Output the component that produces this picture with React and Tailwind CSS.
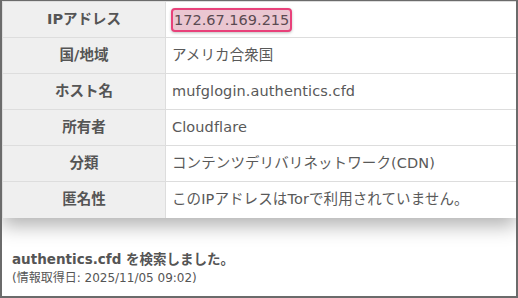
import React from "react";

const rows = [
  { label: "国/地域", value: "アメリカ合衆国" },
  { label: "ホスト名", value: "mufglogin.authentics.cfd" },
  { label: "所有者", value: "Cloudflare" },
  { label: "分類", value: "コンテンツデリバリネットワーク(CDN)" },
  { label: "匿名性", value: "このIPアドレスはTorで利用されていません。" },
];

const font = {
  fontFamily: '"DejaVu Sans", "Noto Sans CJK JP", sans-serif',
};

export default function App() {
  return (
    <div
      className="w-[518px] h-[298px] bg-white border-t border-x-2 border-b-2 border-[#6b6b6b] overflow-hidden text-[#595959]"
      style={font}
    >
      <div className="border-t border-l border-[#dddddd] bg-white shadow-[0_8px_18px_rgba(0,0,0,0.3)]">
        <div className="flex h-[36px] border-b border-[#dddddd]">
          <div className="w-[163px] shrink-0 bg-[#efefef] border-r border-[#dddddd] flex items-center justify-center font-bold text-[14.5px] text-[#555]">
            IPアドレス
          </div>
          <div className="flex-1 flex items-center pl-[5px] text-[14.5px]">
            <span className="rounded-[4px] border-2 border-[#e8417a] bg-[#eac6d1] px-[1px] h-[24px] leading-[20px] text-[#5a4a52] shadow-[0_1px_3px_rgba(0,0,0,0.25)]">
              172.67.169.215
            </span>
          </div>
        </div>
        {rows.map((r, i) => (
          <div
            key={r.label}
            className={`flex h-[36px] ${i < rows.length - 1 ? "border-b border-[#dddddd]" : ""}`}
          >
            <div className="w-[163px] shrink-0 bg-[#efefef] border-r border-[#dddddd] flex items-center justify-center font-bold text-[14.5px] text-[#555]">
              {r.label}
            </div>
            <div className="flex-1 flex items-center pl-[6px] text-[14.5px] tracking-[0.1px]">
              {r.value}
            </div>
          </div>
        ))}
      </div>
      <div className="pt-[32px] pl-[10px] text-[#555]">
        <div className="font-bold text-[13.5px] leading-[18px]">
          authentics.cfd を検索しました。
        </div>
        <div className="text-[12px] leading-[16px] mt-[2px]">
          (情報取得日: 2025/11/05 09:02)
        </div>
      </div>
    </div>
  );
}
